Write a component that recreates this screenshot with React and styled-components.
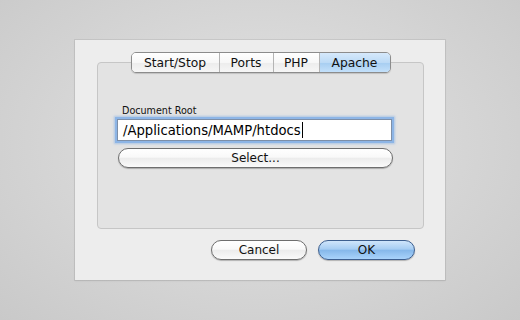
import styled, { createGlobalStyle } from 'styled-components';

const Global = createGlobalStyle`
  html, body {
    margin: 0;
    padding: 0;
  }
  body {
    width: 520px;
    height: 320px;
    overflow: hidden;
    font-family: "DejaVu Sans", "Liberation Sans", sans-serif;
  }
`;

const Stage = styled.div`
  width: 520px;
  height: 320px;
  display: flex;
  align-items: center;
  justify-content: center;
  background: radial-gradient(ellipse at 50% 45%, #e0e0e0 0%, #d8d8d8 45%, #c9c9c9 100%);
`;

const Window = styled.div`
  width: 370px;
  height: 240px;
  box-sizing: border-box;
  background: #ededed;
  box-shadow: 0 0 0 1px rgba(0, 0, 0, 0.07), 0 1px 2px rgba(0, 0, 0, 0.08);
  padding: 12px 21px 0 22px;
  display: flex;
  flex-direction: column;
`;

const TabBar = styled.div`
  align-self: center;
  display: flex;
  height: 21px;
  box-sizing: border-box;
  border: 1px solid #8c8c8c;
  border-radius: 5px;
  overflow: hidden;
  margin-bottom: -11px;
  position: relative;
  z-index: 1;
  box-shadow: 0 1px 1px rgba(0, 0, 0, 0.15);
`;

const Tab = styled.div`
  width: ${p => p.w}px;
  box-sizing: border-box;
  display: flex;
  align-items: center;
  justify-content: center;
  font-size: 12.3px;
  color: #111;
  border-left: ${p => (p.first ? 'none' : '1px solid #b4b4b4')};
  background: ${p => (p.active
    ? 'linear-gradient(#d6e9fb 0%, #bcdaf6 50%, #a6cdf1 51%, #c3e0fa 100%)'
    : 'linear-gradient(#ffffff 0%, #f7f7f7 50%, #ececec 51%, #f6f6f6 100%)')};
`;

const GroupBox = styled.div`
  height: 167px;
  box-sizing: border-box;
  background: #e3e3e3;
  border: 1px solid #c6c6c6;
  border-radius: 4px;
  padding: 41px 30px 0 19px;
  display: flex;
  flex-direction: column;
`;

const Label = styled.div`
  font-size: 9.6px;
  color: #111;
  margin-left: 5px;
  height: 14px;
  line-height: 14px;
`;

const Field = styled.div`
  height: 22px;
  box-sizing: border-box;
  background: #fff;
  border: 1px solid #7d8fa8;
  box-shadow: 0 0 0 2px #8db5e6, 0 0 2px 3px rgba(120, 170, 230, 0.5);
  display: flex;
  align-items: center;
  padding-left: 5px;
  font-size: 13.2px;
  color: #000;
  margin-top: 1px;
  margin-right: 1px;
`;

const Caret = styled.span`
  display: inline-block;
  width: 1px;
  height: 16px;
  background: #000;
  margin-left: 1px;
`;

const Button = styled.div`
  width: ${p => (p.w ? `${p.w}px` : 'auto')};
  height: 20px;
  box-sizing: border-box;
  border-radius: 10px;
  border: 1px solid ${p => (p.primary ? '#3d5f8f' : '#6e6e6e')};
  display: flex;
  align-items: center;
  justify-content: center;
  font-size: 12px;
  color: #111;
  background: ${p => (p.primary
    ? 'linear-gradient(#cfe5fb 0%, #a6cdf3 45%, #86b8ea 52%, #a9d3fb 100%)'
    : 'linear-gradient(#ffffff 0%, #f9f9f9 45%, #ececec 52%, #fafafa 100%)')};
  box-shadow: 0 1px 1px rgba(0, 0, 0, 0.25);
`;

const SelectButton = styled(Button)`
  margin-top: 7px;
  margin-left: 1px;
`;

const Footer = styled.div`
  display: flex;
  justify-content: flex-end;
  gap: 11px;
  margin-top: 11px;
  padding-right: 9px;
`;

const tabs = [
  { name: 'Start/Stop', w: 87 },
  { name: 'Ports', w: 54 },
  { name: 'PHP', w: 46 },
  { name: 'Apache', w: 71, active: true },
];

export default function App() {
  return (
    <>
      <Global />
      <Stage>
        <Window>
          <TabBar>
            {tabs.map((t, i) => (
              <Tab key={t.name} w={t.w} first={i === 0} active={t.active}>
                {t.name}
              </Tab>
            ))}
          </TabBar>
          <GroupBox>
            <Label>Document Root</Label>
            <Field>
              /Applications/MAMP/htdocs
              <Caret />
            </Field>
            <SelectButton>Select...</SelectButton>
          </GroupBox>
          <Footer>
            <Button w={96}>Cancel</Button>
            <Button w={97} primary>OK</Button>
          </Footer>
        </Window>
      </Stage>
    </>
  );
}
